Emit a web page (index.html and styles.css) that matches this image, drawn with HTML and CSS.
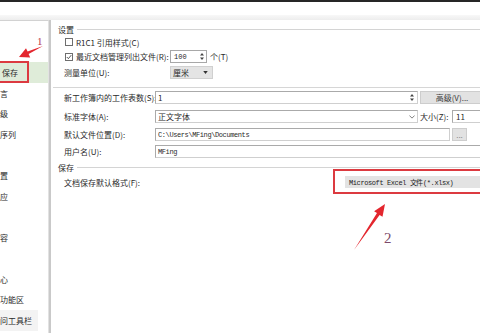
FILE: index.html
```html
<!DOCTYPE html>
<html lang="zh-CN">
<head>
    <meta charset="UTF-8">
    <title>Excel 选项 - 保存</title>
    <link rel="stylesheet" href="styles.css">
</head>
<body>
    <div class="window">
        <div class="topline"></div>
        <div class="titlebar"></div>
        <div class="band"></div>

        <div class="main">
            <ul class="nav">
                <li class="nav-item is-active">保存</li>
                <li class="nav-item">言</li>
                <li class="nav-item">级</li>
                <li class="nav-item">序列</li>
                <li class="nav-item"></li>
                <li class="nav-item">置</li>
                <li class="nav-item">应</li>
                <li class="nav-item"></li>
                <li class="nav-item">容</li>
                <li class="nav-item"></li>
                <li class="nav-item">心</li>
                <li class="nav-item">功能区</li>
                <li class="nav-item is-hover">问工具栏</li>
            </ul>
            <div class="splitter"></div>

            <div class="content">
                <div class="group-title">设置</div>

                <div class="settings">
                    <div class="row row-check">
                        <span class="checkbox"></span>
                        <span>R1C1 引用样式(C)</span>
                    </div>
                    <div class="row">
                        <span class="label">
                            <span class="checkbox">
                                <svg viewBox="0 0 8 8" width="6" height="6"><path d="M1 4 L3.2 6.2 L7 1.5" fill="none" stroke="#333" stroke-width="1.1"/></svg>
                            </span>
                            最近文档管理列出文件(R):
                        </span>
                        <span class="spin">
                            <span class="spin-value">100</span>
                            <span class="spin-arrows">
                                <svg viewBox="0 0 6 9" width="6" height="9"><path d="M3 1 L5 3.5 H1 Z M3 8 L5 5.5 H1 Z" fill="#444"/></svg>
                            </span>
                        </span>
                        <span class="unit">个(T)</span>
                    </div>
                    <div class="row">
                        <span class="label">测量单位(U):</span>
                        <span class="combo">
                            <span>厘米</span>
                            <svg viewBox="0 0 6 4" width="5" height="3"><path d="M0 0 H6 L3 4 Z" fill="#333"/></svg>
                        </span>
                    </div>
                </div>

                <div class="divider"></div>

                <div class="workbook">
                    <div class="row row-first">
                        <span class="label">新工作簿内的工作表数(S):</span>
                        <span class="field field-sheets">
                            <span>1</span>
                            <svg viewBox="0 0 6 9" width="6" height="9"><path d="M3 1 L5 3.5 H1 Z M3 8 L5 5.5 H1 Z" fill="#444"/></svg>
                        </span>
                        <span class="button button-wide">高级(V)...</span>
                    </div>
                    <div class="row row-font">
                        <span class="label">标准字体(A):</span>
                        <span class="field field-sheets">
                            <span>正文字体</span>
                            <svg viewBox="0 0 8 5" width="6" height="4"><path d="M0.5 0.5 L4 4 L7.5 0.5" fill="none" stroke="#555" stroke-width="1"/></svg>
                        </span>
                        <span class="size-label">大小(Z):</span>
                        <span class="field field-size">11</span>
                    </div>
                    <div class="row row-path">
                        <span class="label">默认文件位置(D):</span>
                        <span class="field field-path mono">C:\Users\MFing\Documents</span>
                        <span class="button button-small">...</span>
                    </div>
                    <div class="row row-user">
                        <span class="label">用户名(U):</span>
                        <span class="field field-user mono">MFing</span>
                    </div>
                </div>

                <div class="group-title group-save">保存</div>

                <div class="row row-format">
                    <span class="label label-format">文档保存默认格式(F):</span>
                    <span class="format-select mono">Microsoft Excel 文件(*.xlsx)</span>
                </div>
            </div>
        </div>

        <svg class="marks" viewBox="0 0 480 333" width="480" height="333">
            <rect x="-2" y="62" width="30" height="20" fill="none" stroke="#dc3a40" stroke-width="2"/>
            <rect x="334" y="170" width="160" height="23" fill="none" stroke="#dc3a40" stroke-width="2"/>
            <text x="37" y="45" class="mark-num">1</text>
            <polygon points="43,46 27.6,51.6 26,48.3 19,57 30.2,57.4 28.6,54" fill="#e3262e"/>
            <polygon points="354,250 377,213.1 374.1,211.2 385,204 382.5,216.8 379.6,214.9" fill="#e3262e"/>
            <text x="384" y="243" class="mark-num mark-two">2</text>
        </svg>
    </div>
</body>
</html>
```

FILE: styles.css
```css
* {
    box-sizing: border-box;
}

body {
    margin: 0;
    width: 480px;
    height: 333px;
    overflow: hidden;
    background: #fff;
    color: #2a2a2a;
    font-family: "Noto Sans CJK SC", sans-serif;
    font-size: 8px;
}

.window {
    position: relative;
    width: 480px;
    height: 333px;
    overflow: hidden;
    display: flex;
    flex-direction: column;
}

.topline {
    height: 2px;
    background: #262626;
}

.titlebar {
    height: 13px;
}

.band {
    height: 5px;
    background: linear-gradient(#f8f8f8, #ededed);
}

.main {
    flex: 1;
    display: flex;
    min-height: 0;
}

/* left list, cut off by the crop */
.nav {
    width: 49px;
    margin: 0;
    padding: 41px 0 0;
    list-style: none;
    border-top: 1px solid #d2d2d2;
    border-right: 1px solid #e2e2e2;
    overflow: hidden;
}

.nav-item {
    height: 20.7px;
    display: flex;
    align-items: center;
    white-space: nowrap;
}

.nav-item.is-active {
    padding-left: 2px;
    background: #dfecd9;
}

.nav-item.is-hover {
    width: 38px;
    background: #f3f3f3;
}

.splitter {
    width: 2px;
    background: #c9c9c9;
}

.content {
    flex: 1;
    padding-top: 4px;
    overflow: hidden;
}

.group-title {
    display: flex;
    align-items: center;
    height: 10px;
    padding-left: 7px;
}

.group-title::after {
    content: "";
    flex: 1;
    margin-left: 3px;
    border-top: 1px solid #d4d4d4;
}

.group-save {
    margin-top: 4px;
}

.row {
    display: flex;
    align-items: center;
    height: 13px;
    margin-top: 3px;
    padding-left: 13px;
    white-space: nowrap;
}

.label {
    display: flex;
    align-items: center;
    flex: none;
}

.checkbox {
    width: 8px;
    height: 8px;
    margin: 0 3px 0 1px;
    border: 1px solid #6e6e6e;
    background: #fff;
    display: flex;
    align-items: center;
    justify-content: center;
    flex: none;
}

.settings .row {
    margin-top: 2px;
}

.settings .row-check {
    height: 12px;
}

.settings .row:last-child {
    margin-top: 3px;
}

.settings .label {
    width: 106px;
}

.spin {
    width: 37px;
    height: 13px;
    border: 1px solid #a8a8a8;
    display: flex;
    align-items: center;
    justify-content: space-between;
    padding: 0 1px 0 3px;
    font-family: "Liberation Mono", monospace;
    font-size: 7px;
}

.spin-arrows {
    display: flex;
}

.unit {
    margin-left: 3px;
}

.combo {
    width: 43px;
    height: 13px;
    background: #e4e4e4;
    border: 1px solid #d0d0d0;
    display: flex;
    align-items: center;
    justify-content: space-between;
    padding: 0 4px 0 2px;
}

.divider {
    height: 1px;
    margin: 8px 0 0 2px;
    background: #d6d6d6;
}

.workbook .label {
    width: 91px;
}

.workbook .row-first {
    margin-top: 3px;
}

.workbook .row-font {
    margin-top: 6px;
}

.workbook .row-path {
    margin-top: 5px;
}

.workbook .row-user {
    margin-top: 4px;
}

.field {
    height: 13px;
    border: 1px solid #aaaaaa;
    border-right-color: #cfcfcf;
    border-bottom-color: #cfcfcf;
    background: #fff;
    display: flex;
    align-items: center;
    justify-content: space-between;
    padding: 0 2px;
    flex: none;
}

.field-sheets {
    width: 263px;
}

.field-size {
    width: 40px;
    padding-left: 3px;
}

.field-path {
    width: 295px;
}

.field-user {
    width: 340px;
}

.mono {
    font-family: "Liberation Mono", monospace;
    font-size: 7px;
    letter-spacing: -0.4px;
}

.button {
    height: 13px;
    margin-left: 2px;
    background: #e2e2e2;
    border: 1px solid #cdcdcd;
    display: flex;
    align-items: center;
    justify-content: center;
    flex: none;
    color: #3a3a3a;
}

.button-wide {
    width: 70px;
    padding-right: 6px;
}

.button-small {
    width: 15px;
    color: #888;
}

.size-label {
    width: 32px;
    margin-left: 2px;
    flex: none;
}

.row-format {
    height: 12px;
    margin-top: 4px;
}

.label-format {
    width: 281px;
}

.format-select {
    width: 140px;
    height: 12px;
    background: #e3e3e3;
    display: flex;
    align-items: center;
    padding-left: 4px;
    flex: none;
    color: #222;
}

/* hand drawn annotations on top of the screenshot */
.marks {
    position: absolute;
    top: 0;
    left: 0;
    pointer-events: none;
}

.mark-num {
    font-family: "Liberation Serif", serif;
    font-size: 11px;
    fill: #b83a4a;
}

.mark-two {
    font-size: 15px;
    fill: #7d4a6a;
}
```
